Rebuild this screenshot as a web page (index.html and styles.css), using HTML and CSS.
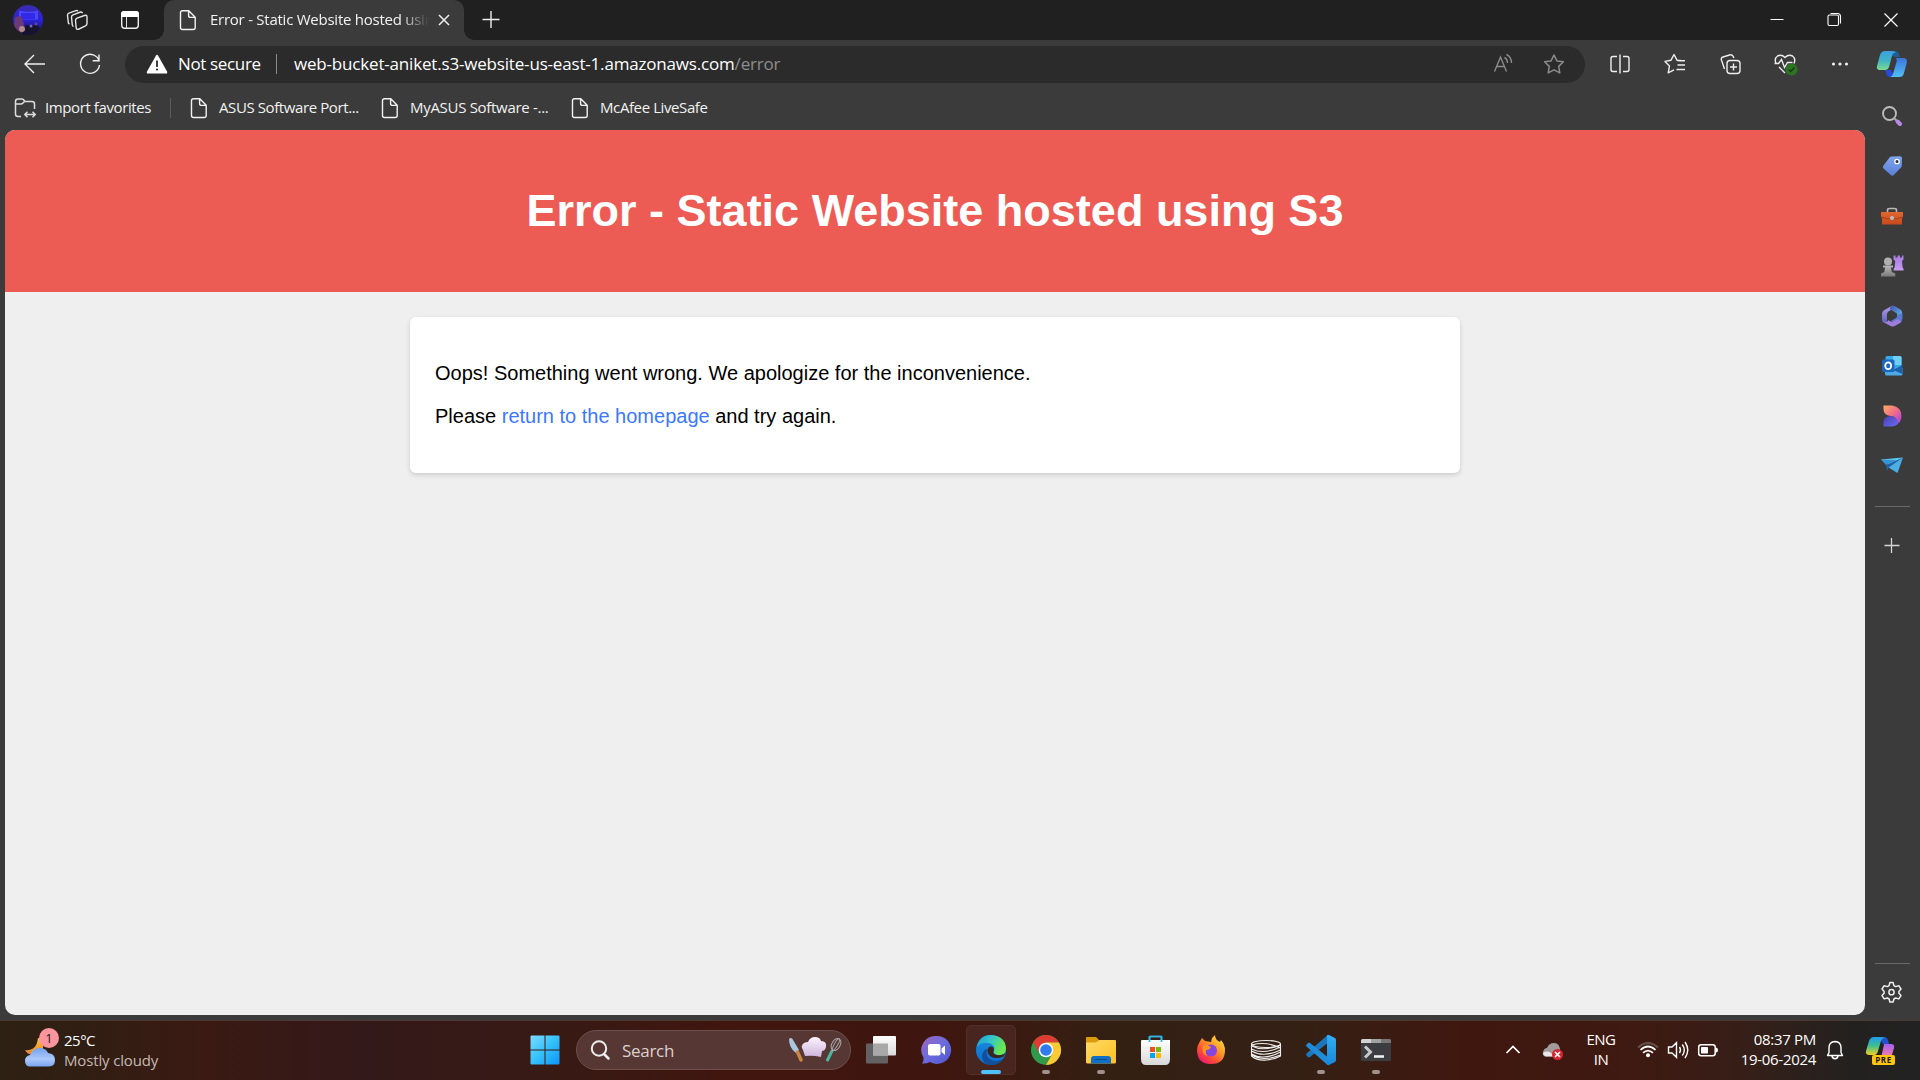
FILE: index.html
```html
<!DOCTYPE html>
<html lang="en">
<head>
<meta charset="utf-8">
<title>Error - Static Website hosted using S3</title>
<link rel="stylesheet" href="styles.css">
</head>
<body>
<svg class="defs" width="0" height="0">
  <defs>
    <linearGradient id="avatar" x1="0" y1="0" x2="0" y2="1"><stop offset="0" stop-color="#3b2cae"/><stop offset=".5" stop-color="#2a22d8"/><stop offset="1" stop-color="#1c1540"/></linearGradient>
    <linearGradient id="copA" x1="0" y1="0" x2="0" y2="1"><stop offset="0" stop-color="#3f9fe0"/><stop offset=".5" stop-color="#3fb3c4"/><stop offset="1" stop-color="#7bdc90"/></linearGradient>
    <linearGradient id="copB" x1="0" y1="0" x2="0" y2="1"><stop offset="0" stop-color="#3c74dc"/><stop offset="1" stop-color="#4fc0f5"/></linearGradient>
    <linearGradient id="copC" x1="0" y1="0" x2="0" y2="1"><stop offset="0" stop-color="#1f9bf0"/><stop offset=".5" stop-color="#3fbf8f"/><stop offset="1" stop-color="#f2d21f"/></linearGradient>
    <linearGradient id="copD" x1="0" y1="0" x2="0" y2="1"><stop offset="0" stop-color="#a560f0"/><stop offset="1" stop-color="#ff7fa0"/></linearGradient>
    <linearGradient id="tag" x1="0" y1="0" x2="0" y2="1"><stop offset="0" stop-color="#7fa4ea"/><stop offset="1" stop-color="#5a80d8"/></linearGradient>
    <linearGradient id="box" x1="0" y1="0" x2="0" y2="1"><stop offset="0" stop-color="#e0692f"/><stop offset="1" stop-color="#c8481c"/></linearGradient>
    <linearGradient id="grey" x1="0" y1="0" x2="0" y2="1"><stop offset="0" stop-color="#b8b8b8"/><stop offset="1" stop-color="#7b7b7b"/></linearGradient>
    <linearGradient id="rook" x1="0" y1="0" x2="0" y2="1"><stop offset="0" stop-color="#a67be0"/><stop offset="1" stop-color="#c79cf2"/></linearGradient>
    <linearGradient id="hexLeft" x1="0" y1="0" x2="0" y2="1"><stop offset="0" stop-color="#b99cf0"/><stop offset="1" stop-color="#5c62c0"/></linearGradient>
    <linearGradient id="hexRight" x1="0" y1="0" x2="1" y2="1"><stop offset="0" stop-color="#3c4fa8"/><stop offset="1" stop-color="#6cc4f4"/></linearGradient>
    <linearGradient id="desA" x1="0" y1="0" x2="1" y2="1"><stop offset="0" stop-color="#ffae60"/><stop offset=".5" stop-color="#ee6c8a"/><stop offset="1" stop-color="#a23be8"/></linearGradient>
    <linearGradient id="desB" x1="0" y1="0" x2="1" y2="1"><stop offset="0" stop-color="#4a3fb0"/><stop offset="1" stop-color="#6a6cf5"/></linearGradient>
    <linearGradient id="cloud" x1="0" y1="0" x2="0" y2="1"><stop offset="0" stop-color="#74a2ee"/><stop offset=".6" stop-color="#abc9fb"/><stop offset="1" stop-color="#7ba5f0"/></linearGradient>
    <linearGradient id="moon" x1="0" y1="0" x2="0" y2="1"><stop offset="0" stop-color="#f8c436"/><stop offset="1" stop-color="#f08030"/></linearGradient>
    <linearGradient id="win" gradientUnits="userSpaceOnUse" x1="1" y1="1" x2="30" y2="30"><stop offset="0" stop-color="#7fdcff"/><stop offset=".5" stop-color="#36c2fb"/><stop offset="1" stop-color="#0c96fb"/></linearGradient>
    <linearGradient id="chat" x1="0" y1="0" x2="1" y2="1"><stop offset="0" stop-color="#9a68b8"/><stop offset=".5" stop-color="#6b6be0"/><stop offset="1" stop-color="#4f55cc"/></linearGradient>
    <linearGradient id="edgeTop" x1="0" y1="0" x2="1" y2=".4"><stop offset="0" stop-color="#1c9be0"/><stop offset=".5" stop-color="#34c6c8"/><stop offset="1" stop-color="#6ce84c"/></linearGradient>
    <linearGradient id="edgeLow" x1="0" y1="0" x2="0" y2="1"><stop offset="0" stop-color="#1c8fdc"/><stop offset="1" stop-color="#0a6cd0"/></linearGradient>
    <linearGradient id="folder" x1="0" y1="0" x2="1" y2="1"><stop offset="0" stop-color="#ffda68"/><stop offset="1" stop-color="#fcc020"/></linearGradient>
    <linearGradient id="white" x1="0" y1="0" x2="0" y2="1"><stop offset="0" stop-color="#ffffff"/><stop offset="1" stop-color="#d8d8d8"/></linearGradient>
    <linearGradient id="fox" x1="1" y1="0" x2=".2" y2="1"><stop offset="0" stop-color="#fff14a"/><stop offset=".4" stop-color="#ffa026"/><stop offset=".75" stop-color="#ff4838"/><stop offset="1" stop-color="#e8157a"/></linearGradient>
    <linearGradient id="vs" x1="0" y1="0" x2="0" y2="1"><stop offset="0" stop-color="#32aef5"/><stop offset="1" stop-color="#1888d8"/></linearGradient>
    <linearGradient id="hat" x1="0" y1="0" x2="0" y2="1"><stop offset="0" stop-color="#fdf3fd"/><stop offset="1" stop-color="#cdb5dd"/></linearGradient>
    <symbol id="doc" viewBox="0 0 32 32"><path d="M10.5 6.8h6.3l6.4 6.4v10.3a2 2 0 0 1-2 2H10.5a2 2 0 0 1-2-2V8.800a2 2 0 0 1 2-2zM16.600 6.800v4.600a2 2 0 0 0 2 2h4.600" fill="none" stroke="currentColor" stroke-width="1.400" stroke-linejoin="round"/></symbol>
  </defs>
</svg>

<header class="titlebar">
  <div class="slot w56"><svg class="ico" viewBox="0 0 32 32"><circle cx="16" cy="16" r="15" fill="url(#avatar)"/><path d="M7 6.500q9 2.500 19 0v9H7z" fill="#4a48f5"/><path d="M9 9h14v6H9z" fill="#3428e8"/><path d="M3 13l6-1 3 8-2 9a15 15 0 0 1-8-8z" fill="#6a3a78"/><path d="M14 21h11l3 3a15 15 0 0 1-18 6z" fill="#18132e"/><circle cx="10" cy="25" r="3" fill="#b58a88"/><circle cx="19" cy="22" r="1.500" fill="#6f69cd"/><circle cx="24" cy="20" r="1.500" fill="#594ba4"/></svg></div>
  <div class="slot w43"><svg class="ico" viewBox="0 0 32 32" fill="none" stroke="#e6e6e6" stroke-width="1.400" stroke-linejoin="round"><path d="M16 14.200l7.500-2.700q2.500-.8 2.500 1.500v6.500q0 1.500-1.500 2.300l-6.500 3.200q-2.500 1-2.800-1l-.7-7.500q0-1.700 1.500-2.300z"/><path d="M12.500 22.500q-1-.3-1.200-1.500l-.8-7.500q-.2-2 1.500-2.700l7.500-2.800q1.600-.3 2 1.200"/><path d="M8.500 20q-1-.5-1.200-1.500l-.8-7q-.2-1.700 1.400-2.300l7-2.600q1.500-.4 2 .6"/></svg></div>
  <div class="slot w62"><svg class="ico" viewBox="0 0 32 32"><rect x="7.700" y="7.700" width="16.600" height="16.600" rx="3" fill="none" stroke="#eee" stroke-width="1.400"/><path d="M7 13V10a3 3 0 0 1 3-3h12a3 3 0 0 1 3 3v3z" fill="#fff"/><path d="M12.500 13v11" stroke="#ddd" stroke-width="1"/></svg></div>
  <div class="tab">
    <svg class="ico" viewBox="0 0 32 32"><use href="#doc"/></svg>
    <span class="tab-title">Error - Static Website hosted using S3</span>
    <svg class="ico close" viewBox="0 0 32 32"><path d="M11 11l10 10M21 11L11 21" stroke="#eee" stroke-width="1.500"/></svg>
  </div>
  <div class="slot w54"><svg class="ico" viewBox="0 0 32 32"><path d="M7.500 15.500h17M16 7v17" stroke="#eee" stroke-width="1.400"/></svg></div>
  <div class="grow"></div>
  <div class="slot w57"><svg class="ico" viewBox="0 0 32 32"><path d="M9.500 15.500h13" stroke="#fff"/></svg></div>
  <div class="slot w57"><svg class="ico" viewBox="0 0 32 32" fill="none" stroke="#fff" stroke-width="1.100"><rect x="10" y="11" width="10.500" height="10.500" rx="1.500"/><path d="M12.500 9.500h7q3 0 3 3v7"/></svg></div>
  <div class="slot w58"><svg class="ico" viewBox="0 0 32 32"><path d="M9.500 9.500l13 13M22.500 9.500l-13 13" stroke="#fff" stroke-width="1.200"/></svg></div>
</header>

<main class="browser">
  <div class="content">
    <nav class="toolbar">
      <div class="slot w70"><svg class="ico" viewBox="0 0 32 32"><path d="M26 16H6.500M15 7l-9 9 9 9" fill="none" stroke="#eee" stroke-width="1.400"/></svg></div>
      <div class="slot w40"><svg class="ico" viewBox="0 0 32 32"><path d="M25.300 13.500A9.500 9.500 0 1 0 25.500 17M25 6.500v6.300h-6.300" fill="none" stroke="#eee" stroke-width="1.400"/></svg></div>
      <div class="address">
        <svg class="ico warn" viewBox="0 0 32 32"><path d="M15 7.500q1-1.500 2 0l9 16q.9 2-1 2H7q-1.900 0-1-2z" fill="#fff"/><path d="M16 12.500v6.500" stroke="#2b2b2b" stroke-width="1.800"/><circle cx="16" cy="21.500" r="1.100" fill="#2b2b2b"/></svg>
        <span class="secure">Not secure</span>
        <span class="bar"></span>
        <span class="url">web-bucket-aniket.s3-website-us-east-1.amazonaws.com<span class="path">/error</span></span>
        <svg class="ico reader" viewBox="0 0 32 32" fill="none" stroke="#8b8b8b" stroke-width="1.400"><path d="M6.500 23.500L12.500 9l6 14.500M8.700 18.500h7.600M16.500 9.500q3 1.500 3 5.500M18.500 6.500q5 2.500 5 8.500"/></svg>
        <svg class="ico star" viewBox="0 0 32 32"><path d="M16 7l2.900 5.900 6.500.9-4.700 4.600 1.100 6.500-5.800-3.100-5.800 3.100 1.100-6.500-4.700-4.600 6.500-.9z" fill="none" stroke="#8b8b8b" stroke-width="1.500" stroke-linejoin="round"/></svg>
      </div>
      <div class="tools">
        <div class="slot w55"><svg class="ico" viewBox="0 0 32 32" fill="none" stroke="#eee" stroke-width="1.400"><path d="M13 8.500H9a2 2 0 0 0-2 2v11a2 2 0 0 0 2 2h4M19 8.500h4a2 2 0 0 1 2 2v11a2 2 0 0 1-2 2h-4M16 6.500v19"/></svg></div>
        <div class="slot w55"><svg class="ico" viewBox="0 0 32 32" fill="none" stroke="#eee" stroke-width="1.400" stroke-linejoin="round"><path d="M22 12.500l-4-.3-3-5.700-3 5.700-6 1.200 4.500 4.500-1.300 7 5.800-3M18.500 12.700H26M18.500 17H26M17.500 21.500H26"/></svg></div>
        <div class="slot w55"><svg class="ico" viewBox="0 0 32 32" fill="none" stroke="#eee" stroke-width="1.400"><rect x="13" y="12.500" width="13" height="13" rx="3"/><path d="M19.500 15.500v7M16 19h7M10.500 21L8 13.500q-2-3.500 1-4.500l6.500-2q3-.8 4 2l.3 1"/></svg></div>
        <div class="slot w55"><svg class="ico" viewBox="0 0 32 32" fill="none" stroke="#eee" stroke-width="1.400"><path d="M7 15.500q-2-5 1.500-7.500 4-2 7.500 1.500 3.500-3.500 7.500-1.500 3.500 2.500 1.500 7.500M10 19l6 6"/><path d="M5.500 15.500h4l3-4 3 8 3-5h5"/><circle cx="22.500" cy="21.500" r="6" fill="#2c7422" stroke="none"/><path d="M19.700 21.500l2 2 3.800-4" stroke="#173a12"/></svg></div>
        <div class="slot w55"><svg class="ico" viewBox="0 0 32 32" fill="#eee"><circle cx="9.500" cy="16" r="1.600"/><circle cx="16" cy="16" r="1.600"/><circle cx="22.500" cy="16" r="1.600"/></svg></div>
      </div>
    </nav>
    <nav class="favorites">
      <a class="fav first"><svg class="ico" viewBox="0 0 32 32" fill="none" stroke="#ddd" stroke-width="1.500"><path d="M12 24.500H9a2.500 2.500 0 0 1-2.500-2.500V9.500A2.500 2.500 0 0 1 9 7h3.500q1.500 0 2.500 1.200l1 1.300h7A2.500 2.500 0 0 1 25.500 12v5M6.500 12h5.500q1 0 2-1l1.500-1.500M16.500 22.500h9M18.500 19.700l-2.700 2.800 2.700 2.800M23.500 19.700l2.700 2.800-2.700 2.800"/></svg><span>Import favorites</span></a>
      <span class="fav-sep"></span>
      <a class="fav a"><svg class="ico" viewBox="0 0 32 32"><use href="#doc"/></svg><span>ASUS Software Port...</span></a>
      <a class="fav b"><svg class="ico" viewBox="0 0 32 32"><use href="#doc"/></svg><span>MyASUS Software -...</span></a>
      <a class="fav c"><svg class="ico" viewBox="0 0 32 32"><use href="#doc"/></svg><span>McAfee LiveSafe</span></a>
    </nav>
    <div class="page">
      <div class="page-header"><h1>Error - Static Website hosted using S3</h1></div>
      <div class="card">
        <p>Oops! Something went wrong. We apologize for the inconvenience.</p>
        <p>Please <a class="home">return to the homepage</a> and try again.</p>
      </div>
    </div>
  </div>

  <aside class="sidebar">
    <div class="side copilot"><svg class="ico" viewBox="0 0 32 32"><path d="M13 2h7q2 0 2.800 2.500L24 8h-5l-4-2z" fill="#1d5f96"/><path d="M6 3q1-1 3-1h7q3 0 4 2-3-1-4 3l-3 11q-1 3-4 3H4q-4 0-3-4L4 6q.7-2 2-3z" fill="url(#copA)"/><path d="M9 21h6l4 7h-5q-3 0-3.700-3z" fill="#2848d8"/><path d="M19 9h8q5 0 3.700 5l-3 11q-1 3-4 3H14q2 0 3-3l3.500-12q1-3.500-1.500-4z" fill="url(#copB)"/></svg></div>
    <div class="side"><svg class="ico" viewBox="0 0 32 32"><circle cx="13.500" cy="13.500" r="6.500" fill="none" stroke="#bcbcbc" stroke-width="1.900"/><path d="M18.500 18.500l2 2" stroke="#aaa" stroke-width="2"/><path d="M21.500 21.500l2.500 2.500" stroke="#b58be8" stroke-width="4" stroke-linecap="round"/></svg></div>
    <div class="side"><svg class="ico" viewBox="0 0 32 32"><path d="M15.500 6.500L24 6.300q2 0 2 2l-.2 7.500q0 1-1 2l-7 7.300q-1.500 1.500-3 0l-7.300-6.500q-1.500-1.500 0-3l6-8q.8-1.100 2-1.100z" fill="url(#tag)"/><circle cx="21" cy="11.500" r="2.200" fill="#26314a" stroke="#fff" stroke-width="1.300"/></svg></div>
    <div class="side"><svg class="ico" viewBox="0 0 32 32"><path d="M11.500 12.500V10q0-1.500 2-1.500h5q2 0 2 1.500v2.500" fill="none" stroke="#b8b8b8" stroke-width="1.600"/><path d="M5 12h22v5l-1 .5v7H6v-7l-1-.5z" fill="url(#box)"/><path d="M5 17q11 4 22 0" stroke="#a83e19" stroke-width="1" fill="none"/><circle cx="16" cy="18" r="2.100" fill="#bbb"/></svg></div>
    <div class="side"><svg class="ico" viewBox="0 0 32 32"><path d="M17.500 5.500h2v2h2v-2h2.500v2h2v-2h1.500v4l-1.500 1.500.6 6.500q1.200.5 1 3h-10q-.2-2.500 1-3l.6-6.500-1.700-1.500z" fill="url(#rook)"/><circle cx="12" cy="11.500" r="4" fill="#b0b0b0"/><path d="M7 15.500h10v2h-2l.8 4.500 3.500 1.500V26.500H5v-3l3.300-1.500.7-4.500H7z" fill="url(#grey)"/></svg></div>
    <div class="side"><svg class="ico" viewBox="0 0 32 32"><path d="M16.500 5.500L8 10.200q-2 1.200-2 3.300v6.500q0 2.500 2.500 2.800 2.500-.3 2.500-2.800v-6q0-1.500 1.500-2.500L17 8.500z" fill="url(#hexLeft)"/><path d="M15 6q2-1 4 .2l5 3q2.200 1.300 2.200 3.500V19L21 16v-2.500L13.500 9z" fill="url(#hexRight)"/><path d="M26.200 13v6.500q0 2-2 3.200L19 25.800l-4-4.800 5-3q1.500-1 1.200-2.700z" fill="#5a78d0"/><path d="M6.300 20.500q.8 1.500 2.700 1.800 2-.2 3.500-2l3.500 2 5-2.700q1-.6 1.500-1.600 0 3 3 3.200-.5 1.200-1.500 1.800L18.500 26q-2 1-4 0L8 22.500q-1.200-.8-1.700-2z" fill="#9f7ddc"/></svg></div>
    <div class="side"><svg class="ico" viewBox="0 0 32 32"><rect x="9.500" y="6" width="16" height="17" rx="1.500" fill="#36a9e8"/><path d="M17 6h7q1.500 0 1.500 1.500V15H17z" fill="#70cdf4"/><path d="M9 15l17.500 3v6q0 1.500-1.500 1.500H10.500Q9 25.500 9 24z" fill="#4da9e5"/><path d="M17 20l9.500-5v9z" fill="#1b62a8"/><rect x="6" y="9.500" width="12.500" height="12.500" rx="1.500" fill="#1b67bf"/><ellipse cx="12.200" cy="15.700" rx="3" ry="3.400" fill="none" stroke="#fff" stroke-width="1.800"/></svg></div>
    <div class="side"><svg class="ico" viewBox="0 0 32 32"><path d="M7.500 5.500H16q9.500 1.500 9.500 10.500 0 5-4 8-1-8-7-8-7-1-7-7z" fill="url(#desA)"/><path d="M7.500 26.500q-1.500-10 7-10.500 7 0 7.500 8-3 2.500-7 2.500z" fill="url(#desB)"/></svg></div>
    <div class="side"><svg class="ico" viewBox="0 0 32 32"><path d="M5 9.500l22-2-13 8z" fill="#63ccf2"/><path d="M27 7.500L10 15l1 6 2-4z" fill="#1d64a8"/><path d="M27 7.500L12.500 17.500l9 5.500z" fill="#4caee4"/><path d="M5 9.500L10 15l11-5z" fill="#3793d4"/></svg></div>
    <span class="rule"></span>
    <div class="side add"><svg class="ico" viewBox="0 0 32 32"><path d="M8.500 15.500h15M15.500 8v15" stroke="#d6d6d6" stroke-width="1.300"/></svg></div>
    <div class="grow"></div>
    <span class="rule low"></span>
    <div class="side gear"><svg class="ico" viewBox="0 0 32 32" fill="none" stroke="#eee" stroke-width="1.500" stroke-linejoin="round"><path d="M13.900 6.400h3.200l.8 3.200 1.700 1 3.200-.9 2.200 3.300-2.100 2.400v1.800l2.100 2.400-2.200 3.300-3.200-.9-1.700 1-.8 3h-3.200l-.8-3-1.700-1-3.200.9L6 19.600l2.100-2.400v-1.800L6 13l2.200-3.300 3.200.9 1.700-1z"/><circle cx="15.500" cy="16.200" r="2.600"/></svg></div>
  </aside>
</main>

<footer class="taskbar">
  <div class="weather">
    <div class="weather-icon">
      <svg class="ico" viewBox="0 0 32 32"><path d="M14 3q-1 8-5 10.500T1 15q2 4 6 4.500l12-5V4z" fill="url(#moon)"/><path d="M6 31.500q-5 0-5-6 0-4.500 5-5.500Q9 13 15.500 13t8.500 5q7 .5 7 7 0 6.500-6 6.500z" fill="url(#cloud)"/></svg>
      <span class="badge">1</span>
    </div>
    <div class="weather-text"><span class="temp">25°C</span><span class="sky">Mostly cloudy</span></div>
  </div>
  <div class="apps">
    <div class="start"><svg class="ico" viewBox="0 0 32 32" fill="url(#win)"><path d="M1.500 2.500q0-1 1-1h13v14h-14zM16.500 1.500h13q1 0 1 1v13h-14zM1.500 16.500h14v14h-13q-1 0-1-1zM16.500 16.500h14v13q0 1-1 1h-13z"/></svg></div>
    <div class="search">
      <svg class="ico" viewBox="0 0 32 32"><circle cx="15" cy="14.500" r="7.200" fill="none" stroke="#eee" stroke-width="2"/><path d="M20 20l4.500 4.500" stroke="#eee" stroke-width="2.500" stroke-linecap="round"/></svg>
      <span class="search-label">Search</span>
      <svg class="cook" viewBox="0 0 54 28"><path d="M1 3q2-2 3.500 0L11 14l-3 3Q1 12 1 3z" fill="#a9c8e0"/><path d="M9.500 16l3.500 8" stroke="#c98544" stroke-width="3.500" stroke-linecap="round"/><path d="M17 20l-2-6q-3-4 1-7 2-1 4-1 2-5 7-5t6 4q6 0 5 6-1 4-4 4l-1 6q-8-2-16-1z" fill="url(#hat)"/><path d="M39.500 24L44 15" stroke="#48b9a4" stroke-width="3" stroke-linecap="round"/><g fill="none" stroke="#aaa"><ellipse cx="48" cy="8.500" rx="4.200" ry="6.500" transform="rotate(30 48 8.500)"/><ellipse cx="48" cy="8.500" rx="1.700" ry="6.500" transform="rotate(30 48 8.500)"/></g></svg>
    </div>
    <div class="app first-app"><svg class="ico" viewBox="0 0 32 32"><rect x="1" y="9.500" width="22" height="20" rx="1" fill="#626262"/><rect x="8" y="2" width="23" height="19.500" rx="1" fill="url(#white)"/><path d="M8 9.500h15v12H8z" fill="#a8a8a8"/></svg></div>
    <div class="app"><svg class="ico" viewBox="0 0 32 32"><path d="M16 2a14 14 0 1 1-6 26q-4 2-8 1.500 2-3 1.500-6A14 14 0 0 1 16 2z" fill="url(#chat)"/><rect x="8" y="10" width="12.500" height="11.500" rx="1.800" fill="#fff"/><path d="M21.500 14.500l3.500-3v9.500l-3.500-3z" fill="#fff"/></svg></div>
    <div class="app active"><svg class="ico" viewBox="0 0 32 32"><circle cx="16" cy="16" r="15" fill="url(#edgeLow)"/><path d="M2 13Q4 1 16 1q14 1 15 13 0 8-8 7-5-1-4-4 2-6-5-8-8-1-12 4z" fill="url(#edgeTop)"/><path d="M12 15q-2 8 4 11 7 3 13-2-5 8-14 7-8-2-8-9 1-6 5-7z" fill="#124f9a"/><path d="M15 12.500q-3 1.500-2.500 5.500 1.500 5.500 8 6 5 .2 8-1.500l2-3q-6 3-10.500 1-3-1.500-1-4.500 0-4-4-3.500z" fill="#3c241e"/></svg><span class="run on"></span></div>
    <div class="app"><svg class="ico" viewBox="0 0 32 32"><circle cx="16" cy="16" r="15" fill="#2f9a4a"/><path d="M3 8.500A15 15 0 0 1 29 8.500H16l-6.500 11z" fill="#de3c32"/><path d="M29 8.500A15 15 0 0 1 16 31l6.500-11.500L16 8.500z" fill="#fcc934"/><circle cx="16" cy="16" r="7.300" fill="#fff"/><circle cx="16" cy="16" r="5.800" fill="#2f7cec"/></svg><span class="run"></span></div>
    <div class="app"><svg class="ico" viewBox="0 0 32 32"><path d="M1 4q0-1 1-1h9l3 3-2 3H1z" fill="#dd9b0c"/><path d="M1 8.500h10L14 6h16q1 0 1 1v21q0 1.500-1.500 1.500h-27Q1 29.500 1 28z" fill="url(#folder)"/><path d="M6 29.500V25q0-3 3-3h14q3 0 3 3v4.500z" fill="#116fc4"/><path d="M10 25.500h12" stroke="#0b4b91"/></svg><span class="run"></span></div>
    <div class="app"><svg class="ico" viewBox="0 0 32 32"><path d="M9.500 8V3.500q0-1 1-1h10q1 0 1 1V8" fill="none" stroke="#30b7ec" stroke-width="1.700"/><path d="M1 7q0-1 1-1h28v19q0 6-5 6H6q-5 0-5-6z" fill="url(#white)"/><path d="M9.500 2.500h12V8" fill="none" stroke="#30b7ec" stroke-width="1.700"/><path d="M9.500 2v6" stroke="#30b7ec" stroke-width="1.700"/><path d="M10 13h5v5h-5z" fill="#f25022"/><path d="M16 13h5v5h-5z" fill="#7fba00"/><path d="M10 19h5v5h-5z" fill="#00a4ef"/><path d="M16 19h5v5h-5z" fill="#ffb900"/></svg></div>
    <div class="app"><svg class="ico" viewBox="0 0 32 32"><path d="M4 9l3-5 3 3 6 1 1-4 3-3q0 5 5 7l1-2q4 5 4 10 0 14-14 14T2 16q0-4 2-7z" fill="url(#fox)"/><circle cx="16" cy="16.500" r="6" fill="#8446e0"/><path d="M8 12q4-2 6 0l2 1q-1 3-5 3-1 3 1 6-6-2-4-10z" fill="#ff9220"/></svg></div>
    <div class="app"><svg class="ico" viewBox="0 0 32 32" fill="none" stroke="#eee" stroke-width="1.100"><path d="M1.500 10v12q6 5 15 4t14-4V10"/><ellipse cx="16" cy="10" rx="14.500" ry="3.500"/><path d="M1.500 12q12 6 29-1M1.500 15q12 6 29-2M1.500 17q12 7 29-1M1.500 20q12 7 29-2M1.500 21q12 7 29 0M1.500 11q15-4 29 3"/></svg></div>
    <div class="app"><svg class="ico" viewBox="0 0 32 32"><path d="M22 1.500v8L5 23q-1 .8-2 0l-1.500-1.500q-1-1 0-2z" fill="#1b76bc"/><path d="M22 30.500v-8L5 9q-1-.8-2 0l-1.500 1.500q-1 1 0 2z" fill="#208bd6"/><path d="M22 1.300q1-.8 2-.3l6 3q1 .6 1 2v20q0 1.400-1 2l-6 3q-1 .5-2-.3z" fill="url(#vs)"/></svg><span class="run"></span></div>
    <div class="app"><svg class="ico" viewBox="0 0 32 32"><rect x="1" y="5" width="30" height="22" rx="1.500" fill="#3b3d40"/><path d="M1 9V6.500Q1 5 2.500 5H11v4z" fill="#d2d2d2"/><path d="M11 5h10v4H11z" fill="#a2a2a2"/><path d="M21 5h8.500Q31 5 31 6.500V9H21z" fill="#777"/><path d="M5 12.500l5.500 5.500L5 23.500" fill="none" stroke="#c8c8c8" stroke-width="3"/><path d="M14 22.500h10" stroke="#eee" stroke-width="2.600"/></svg><span class="run"></span></div>
  </div>
  <div class="tray">
    <div class="slot w40"><svg class="ico" viewBox="0 0 32 32"><path d="M9.500 19l6.500-6.500 6.500 6.500" fill="none" stroke="#fff" stroke-width="1.700"/></svg></div>
    <div class="slot w40"><svg class="ico" viewBox="0 0 32 32"><path d="M9 23q-4-1-3-5t4-4q2-5 7-5 6 0 6 8v6z" fill="#a19b99"/><path d="M8 22q-2-1-2-3 5-4 11 3z" fill="#e8e8e8"/><circle cx="20.500" cy="20.500" r="5.500" fill="#d62530"/><path d="M18 18l5 5M23 18l-5 5" stroke="#fff" stroke-width="1.700"/></svg></div>
    <div class="lang"><span>ENG</span><span>IN</span></div>
    <div class="slot w30"><svg class="ico" viewBox="0 0 32 32" fill="none" stroke="#fff" stroke-width="1.700"><path d="M6 13.500q10-9 20 0" stroke="#6a534c"/><path d="M8.500 16q7.500-7 15 0M11 18.800q5-4.500 10 0"/><circle cx="16" cy="21.300" r="2" fill="#fff" stroke="none"/></svg></div>
    <div class="slot w30"><svg class="ico" viewBox="0 0 32 32" fill="none" stroke="#fff" stroke-width="1.400"><path d="M6.500 13h3.500l4.500-4.300v14.600L10 19H6.500zM17.500 13q2 3 0 6M20.300 10.500q4 5.500 0 11M23 8q5.500 8 0 16"/></svg></div>
    <div class="slot w30"><svg class="ico" viewBox="0 0 32 32"><rect x="6.700" y="10.700" width="16.500" height="11" rx="2.500" fill="none" stroke="#fff" stroke-width="1.500"/><path d="M24 13.500q2 0 2 2.500t-2 2.500z" fill="#fff"/><rect x="9" y="13" width="7" height="6.500" rx=".8" fill="#fff"/></svg></div>
    <div class="clock"><span>08:37 PM</span><span>19-06-2024</span></div>
    <div class="slot w38"><svg class="ico" viewBox="0 0 32 32" fill="none" stroke="#fff" stroke-width="1.400" stroke-linejoin="round"><path d="M8.500 21.500l1.500-3V14q0-6.300 6-6.500 6 .2 6 6.500v4.500l1.500 3zM13 22q.5 2.700 3 2.700t3-2.700"/></svg></div>
    <div class="pre"><svg class="ico" viewBox="0 0 32 32"><path d="M14 3h5q3 0 4 3l1 4h-6z" fill="#234fd0"/><path d="M6 4q1-1 3-1h7q3 0 4 1-3 0-4 3l-3 10q-1 4-4 4H5q-5 0-4-4L4 7q.7-2 2-3z" fill="url(#copC)"/><path d="M19 10h7q4 0 3 4l-3 10H14q2-1 3-4z" fill="url(#copD)"/></svg><span class="pre-badge">PRE</span></div>
  </div>
</footer>
</body>
</html>
```
FILE: styles.css
```css
* { box-sizing: border-box; }

body {
  margin: 0;
  width: 1920px;
  height: 1080px;
  overflow: hidden;
  display: flex;
  flex-direction: column;
  background: #3b3b3b;
  color: #f2f2f2;
  font-family: "Open Sans", "Noto Sans", sans-serif;
  font-size: 15px;
  white-space: nowrap;
}

.defs { position: absolute; }
.ico { width: 32px; height: 32px; display: block; flex: none; overflow: visible; }
.slot { display: grid; place-items: center; flex: none; }
.grow { flex: 1; }
.w30 { width: 30px; }
.w38 { width: 38px; }
.w40 { width: 40px; }
.w43 { width: 43px; }
.w54 { width: 54px; }
.w55 { width: 55px; }
.w56 { width: 56px; }
.w57 { width: 57px; }
.w58 { width: 58px; }
.w62 { width: 62px; }
.w70 { width: 70px; }

/* Title bar and tab */
.titlebar {
  height: 40px;
  flex: none;
  display: flex;
  align-items: center;
  background: #202020;
}
.titlebar .w43 { padding-right: 1px; }
.tab {
  position: relative;
  width: 300px;
  height: 40px;
  margin-left: 3px;
  padding-left: 8px;
  display: flex;
  align-items: center;
  background: #3b3b3b;
  border-radius: 10px 10px 0 0;
}
.tab::before,
.tab::after {
  content: "";
  position: absolute;
  bottom: 0;
  width: 10px;
  height: 10px;
}
.tab::before { left: -10px; background: radial-gradient(circle at 0 0, transparent 9.5px, #3b3b3b 10px); }
.tab::after { right: -10px; background: radial-gradient(circle at 100% 0, transparent 9.5px, #3b3b3b 10px); }
.tab-title {
  width: 219px;
  margin-left: 6px;
  padding-bottom: 2px;
  overflow: hidden;
  letter-spacing: -0.25px;
  -webkit-mask-image: linear-gradient(90deg, #000 190px, transparent 219px);
  mask-image: linear-gradient(90deg, #000 190px, transparent 219px);
}
.tab .close { margin-left: -1px; }

/* Browser body */
.browser { height: 980px; flex: none; display: flex; }
.content { width: 1865px; flex: none; display: flex; flex-direction: column; }
.toolbar { height: 48px; display: flex; align-items: center; }
.address {
  width: 1460px;
  height: 37px;
  flex: none;
  margin-left: 15px;
  padding-left: 16px;
  display: flex;
  align-items: center;
  border-radius: 19px;
  background: #2b2b2b;
  color: #fff;
  font-size: 17px;
}
.secure { width: 83px; margin-left: 5px; padding-bottom: 2px; letter-spacing: -0.35px; }
.bar { width: 1px; height: 20px; margin: 0 17px 0 15px; background: #8a8a8a; }
.url { flex: 1; padding-bottom: 2px; letter-spacing: -0.18px; }
.path { color: #8d8d8d; }
.reader { margin-right: 18px; }
.star { margin-right: 15px; }
.tools { display: flex; margin: 0 -2px 0 7px; }

.favorites { height: 42px; padding: 0 0 2px 9px; display: flex; align-items: center; }
.fav { display: flex; align-items: center; gap: 4px; letter-spacing: -0.4px; }
.fav span { padding-bottom: 2px; }
.fav.first { width: 161px; }
.fav-sep { width: 1px; height: 20px; background: #5b5b5b; }
.fav.a { width: 191px; margin-left: 12px; }
.fav.b { width: 190px; letter-spacing: -0.3px; }

/* Hosted page, drawn at 125% zoom */
.page {
  height: 885px;
  margin-left: 5px;
  overflow: hidden;
  border-radius: 10px;
  background: #efefef;
  color: #000;
  font-family: "Liberation Sans", Arial, sans-serif;
  font-size: 20px;
  line-height: 23px;
}
.page-header { height: 162px; padding: 25px; background: #ec5c54; color: #fff; text-align: center; }
.page-header h1 { margin: 30px 0; font-size: 45px; line-height: 51px; }
.card {
  width: 1050px;
  height: 156px;
  margin: 25px auto 0;
  padding: 25px;
  border-radius: 6px;
  background: #fff;
  box-shadow: 0 2px 5px rgba(0, 0, 0, 0.15);
}
.card p { margin: 20px 0; }
.home { color: #3b78ff; }

/* Edge sidebar */
.sidebar { width: 55px; padding-right: 1px; display: flex; flex-direction: column; align-items: center; color: #eee; }
.side { height: 50px; flex: none; display: grid; place-items: center; }
.side.copilot { height: 51px; padding-bottom: 1px; }
.rule { width: 35px; height: 1px; margin-top: 15px; background: #686868; }
.side.add { margin-top: 14px; }
.rule.low { margin: 0; }
.side.gear { height: 56px; }

/* Taskbar */
.taskbar {
  height: 60px;
  display: flex;
  align-items: center;
  padding-bottom: 1px;
  border-top: 1px solid #4b3932;
  background: linear-gradient(90deg, #2d2113 0, #311e13 80px, #3a1a12 200px, #34191a 360px, #371a15 540px, #40160f 720px, #3f160f 930px, #341f13 1110px, #342014 1290px, #40170f 1470px, #3d1a12 1650px, #351f18 1750px, #232120 1850px, #222 1920px);
}
.weather { width: 520px; flex: none; display: flex; padding-left: 24px; }
.weather-icon { position: relative; width: 40px; height: 40px; padding-top: 5px; }
.badge {
  position: absolute;
  left: 15px;
  top: -2px;
  width: 20px;
  height: 20px;
  border-radius: 50%;
  background: #fb949c;
  color: #2b1517;
  font-size: 13px;
  line-height: 20px;
  text-align: center;
}
.weather-text { display: flex; flex-direction: column; padding-bottom: 1px; line-height: 20px; font-size: 15px; }
.temp { color: #fff; letter-spacing: -0.5px; }
.sky { color: #c4b9b5; letter-spacing: -0.15px; }
.apps { width: 973px; flex: none; display: flex; align-items: center; }
.start { width: 56px; padding-left: 9px; }
.search {
  width: 275px;
  height: 40px;
  display: flex;
  align-items: center;
  padding-left: 7px;
  border: 1px solid #6d504b;
  border-radius: 20px;
  background: #573733;
}
.search-label { flex: 1; margin-left: 6px; color: #dcd0cd; font-size: 17px; letter-spacing: -0.3px; }
.cook { width: 54px; height: 28px; margin-right: 8px; }
.app {
  position: relative;
  width: 50px;
  height: 50px;
  margin-right: 5px;
  display: grid;
  place-items: center;
  border-radius: 5px;
}
.first-app { margin-left: 5px; }
.active { background: #48261f; border: 1px solid #50302a; }
.run {
  position: absolute;
  bottom: 1px;
  left: 21px;
  width: 8px;
  height: 4px;
  border-radius: 2px;
  background: #a0918c;
}
.run.on { left: 14px; bottom: 0; width: 20px; background: #4cc2ff; }
.tray { display: flex; align-items: center; flex: 1; color: #fff; font-size: 15px; }
.lang {
  width: 59px;
  padding: 0 3px 2px 0;
  display: flex;
  flex-direction: column;
  align-items: center;
  line-height: 20px;
  letter-spacing: -0.5px;
}
.clock {
  width: 94px;
  padding-bottom: 3px;
  display: flex;
  flex-direction: column;
  align-items: flex-end;
  line-height: 20px;
  letter-spacing: -0.3px;
}
.pre { position: relative; width: 52px; padding-left: 11px; }
.pre-badge {
  position: absolute;
  left: 18px;
  bottom: 1px;
  width: 23px;
  height: 10px;
  border-radius: 2px;
  background: #ffc60a;
  color: #20180a;
  font-size: 8px;
  font-weight: 700;
  line-height: 10px;
  text-align: center;
  letter-spacing: 0.5px;
}
```
